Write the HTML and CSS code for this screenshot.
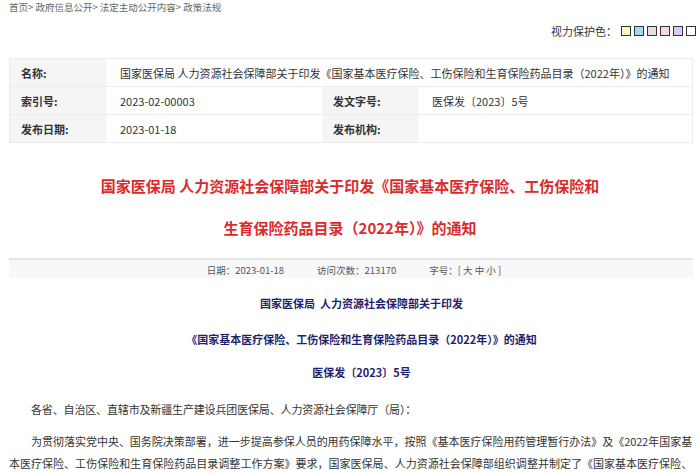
FILE: index.html
```html
<!DOCTYPE html>
<html>
<head>
    <meta charset="utf-8" />
    <title>政策法规</title>
    <link rel="stylesheet" href="styles.css">
</head>
<body>
    <div class="daohang">
        <a href="#">首页</a>&gt; <a href="#">政府信息公开</a>&gt; <a href="#">法定主动公开内容</a>&gt; <a href="#">政策法规</a>
    </div>
    <div class="shili">
        <span>视力保护色：</span>
        <span class="se se1"></span>
        <span class="se se2"></span>
        <span class="se se3"></span>
        <span class="se se4"></span>
        <span class="se se5"></span>
        <span class="se se6"></span>
    </div>

    <table class="xinxi">
        <tr>
            <th>名称:</th>
            <td colspan="3">国家医保局 人力资源社会保障部关于印发《国家基本医疗保险、工伤保险和生育保险药品目录（2022年）》的通知</td>
        </tr>
        <tr>
            <th>索引号:</th>
            <td class="zhi">2023-02-00003</td>
            <th class="th2">发文字号:</th>
            <td>医保发〔2023〕5号</td>
        </tr>
        <tr>
            <th>发布日期:</th>
            <td class="zhi">2023-01-18</td>
            <th class="th2">发布机构:</th>
            <td></td>
        </tr>
    </table>

    <h1 class="biaoti">国家医保局 人力资源社会保障部关于印发《国家基本医疗保险、工伤保险和<br>生育保险药品目录（2022年）》的通知</h1>

    <div class="tiao">
        <span>日期：2023-01-18</span>
        <span>访问次数：213170</span>
        <span>字号：[ <a href="#">大</a> <a href="#">中</a> <a href="#">小</a> ]</span>
    </div>

    <div class="zhengwen">
        <p class="zhong zhong1">国家医保局&nbsp;&nbsp;人力资源社会保障部关于印发</p>
        <p class="zhong zhong2">《国家基本医疗保险、工伤保险和生育保险药品目录（2022年）》的通知</p>
        <p class="zhong zhong3">医保发〔2023〕5号</p>
        <p>各省、自治区、直辖市及新疆生产建设兵团医保局、人力资源社会保障厅（局）：</p>
        <p>为贯彻落实党中央、国务院决策部署，进一步提高参保人员的用药保障水平，按照《基本医疗保险用药管理暂行办法》及《2022年国家基本医疗保险、工伤保险和生育保险药品目录调整工作方案》要求，国家医保局、人力资源社会保障部组织调整并制定了《国家基本医疗保险、工伤保险和生育保险药品目录（2022年）》（以下简称《药品目录》），现予印发，并就有关事项通知如下。</p>
    </div>
</body>
</html>
```

FILE: styles.css
```css
body {
    margin: 0;
    font-family: "Noto Sans CJK SC", "Noto Sans", sans-serif;
    font-size: 11px;
    color: #333;
    background-color: white;
}

a {
    color: inherit;
    text-decoration: none;
}

.daohang {
    padding-left: 9px;
    height: 16px;
    line-height: 15px;
    font-size: 9.5px;
    color: #666;
}

.shili {
    display: flex;
    align-items: center;
    justify-content: flex-end;
    gap: 3px;
    height: 30px;
    padding-right: 4px;
    color: #333;
}

.shili span:first-child {
    margin-right: 1px;
}

.se {
    width: 8px;
    height: 8px;
    border: 1px solid #333;
}

.se1 { background-color: #fbf9bf; }
.se2 { background-color: #9fd9f6; }
.se3 { background-color: #e0e0e0; }
.se4 { background-color: #fdd5de; }
.se5 { background-color: #dfc8f7; }
.se6 { background-color: #ffffff; }

.xinxi {
    width: 684px;
    margin: 12px 0 0 9px;
    border-collapse: collapse;
    border: 1px solid #ececec;
}

.xinxi th, .xinxi td {
    height: 27px;
    padding: 0;
    border-bottom: 1px solid #ececec;
    text-align: left;
}

.xinxi th {
    width: 85px;
    padding-left: 11px;
    background-color: #f5f5f5;
    font-weight: bold;
}

.xinxi td {
    padding-left: 14px;
}

.xinxi .zhi {
    width: 202px;
}

.biaoti {
    margin: 22px 0 0;
    text-align: center;
    font-size: 15px;
    line-height: 42px;
    color: #dc2a2c;
}

.tiao {
    display: flex;
    justify-content: center;
    gap: 33px;
    width: 684px;
    margin: 9px 0 0 9px;
    height: 20px;
    line-height: 20px;
    border-top: 2px solid #e6e6e6;
    background-color: #f8f8f8;
    color: #555;
    font-size: 9.5px;
    padding-left: 6px;
    box-sizing: border-box;
}

.zhengwen {
    margin: 14px 8px 0 9px;
}

.zhengwen p {
    margin: 0 0 10px;
    line-height: 22px;
    text-indent: 2em;
    text-align: justify;
    letter-spacing: -0.15px;
}

.zhengwen .zhong {
    text-align: center;
    font-weight: bold;
    color: #1f1f6e;
    letter-spacing: 0;
}

.zhengwen .zhong1 {
    margin-bottom: 14px;
}

.zhengwen .zhong2 {
    margin-bottom: 11px;
}

.zhengwen .zhong3 {
    margin-bottom: 15px;
}
```
